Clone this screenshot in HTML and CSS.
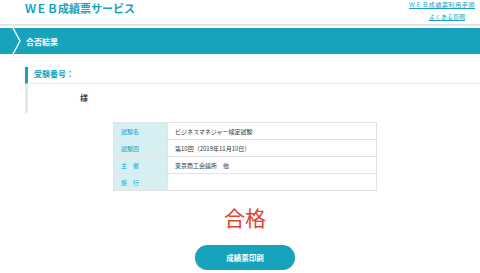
FILE: index.html
```html
<!DOCTYPE html>
<html lang="ja">
<head>
  <meta charset="UTF-8" />
  <meta name="viewport" content="width=device-width, initial-scale=1.0"/>
  <title>WEB成績票サービス</title>
  <link rel="stylesheet" href="styles.css">
</head>
<body>

  <header class="site-header">
    <div class="logo">ＷＥＢ成績票サービス</div>
    <nav class="header-links">
      <a href="#">ＷＥＢ成績票利用手順</a>
      <a href="#">よくある質問</a>
    </nav>
  </header>

  <div class="page-bar">
    <svg class="chevron" width="10" height="26" viewBox="0 0 10 26">
      <polyline points="1,0 8,13 1,26" fill="none" stroke="#fff" stroke-width="1.4"/>
    </svg>
    <h1>合否結果</h1>
  </div>

  <main class="content">
    <section class="examinee">
      <h2>受験番号：</h2>
      <div class="examinee-name">様</div>
    </section>

    <table class="exam-table">
      <tr>
        <th>試験名</th>
        <td>ビジネスマネジャー検定試験</td>
      </tr>
      <tr>
        <th>試験回</th>
        <td>第10回（2019年11月10日）</td>
      </tr>
      <tr>
        <th>主　催</th>
        <td>東京商工会議所　他</td>
      </tr>
      <tr>
        <th>施　行</th>
        <td></td>
      </tr>
    </table>

    <div class="result">合格</div>

    <button class="print-btn">成績票印刷</button>
  </main>

</body>
</html>
```

FILE: styles.css
```css
:root {
  --teal: #17a3bc;
  --teal-light: #d6eff3;
  --red: #e5412c;
  --text: #333;
  --line: #e3e3e3;
}

* {
  box-sizing: border-box;
}

body {
  margin: 0;
  font-family: 'Noto Sans CJK JP', 'Noto Sans', sans-serif;
  background: #fff;
  color: var(--text);
}

.site-header {
  display: flex;
  justify-content: space-between;
  align-items: flex-start;
  height: 26px;
  padding: 0 5px 0 25px;
  border-bottom: 2px solid #e4e4e4;
}

.logo {
  color: var(--teal);
  font-size: 11px;
  font-weight: bold;
  line-height: 16px;
}

.header-links {
  display: flex;
  flex-direction: column;
  align-items: flex-end;
  font-size: 6px;
  line-height: 7px;
  padding-top: 1px;
}

.header-links a {
  color: var(--teal);
  margin-bottom: 5px;
}

.header-links a:first-child {
  letter-spacing: 0.6px;
}

.header-links a:last-child {
  margin-right: 10px;
}

.page-bar {
  display: flex;
  align-items: center;
  gap: 4px;
  height: 26px;
  margin-top: 2px;
  padding-left: 12px;
  background: var(--teal);
}

.page-bar h1 {
  margin: 0;
  color: #fff;
  font-size: 8px;
  font-weight: bold;
}

.content {
  padding: 13px 0 0 10px;
  display: flex;
  flex-direction: column;
  align-items: center;
}

.examinee {
  align-self: stretch;
  margin-left: 15px;
  border-left: 3px solid #e6e9ea;
  height: 46px;
}

.examinee h2 {
  margin: 0 0 0 -3px;
  padding: 2px 0 4px 6px;
  border-left: 3px solid var(--teal);
  border-bottom: 1px solid #eeeeee;
  color: var(--teal);
  font-size: 8px;
  font-weight: bold;
  line-height: 10px;
}

.examinee-name {
  margin: 8px 0 0 52px;
  font-size: 8px;
  font-weight: bold;
  color: #444;
}

.exam-table {
  width: 264px;
  margin-top: 9px;
  border-collapse: collapse;
  font-size: 6px;
}

.exam-table th,
.exam-table td {
  height: 17px;
  border: 1px solid var(--line);
  padding: 0 7px;
  text-align: left;
  font-weight: normal;
}

.exam-table th {
  width: 54px;
  background: var(--teal-light);
  color: var(--teal);
}

.exam-table td {
  color: #333;
}

.result {
  margin-top: 14px;
  color: var(--red);
  font-size: 21px;
  line-height: 24px;
}

.print-btn {
  margin-top: 16px;
  width: 100px;
  height: 25px;
  border: none;
  border-radius: 13px;
  background: var(--teal);
  color: #fff;
  font-family: inherit;
  font-size: 7.5px;
  font-weight: bold;
  box-shadow: 0 1px 2px rgba(0,0,0,0.15);
}
```
